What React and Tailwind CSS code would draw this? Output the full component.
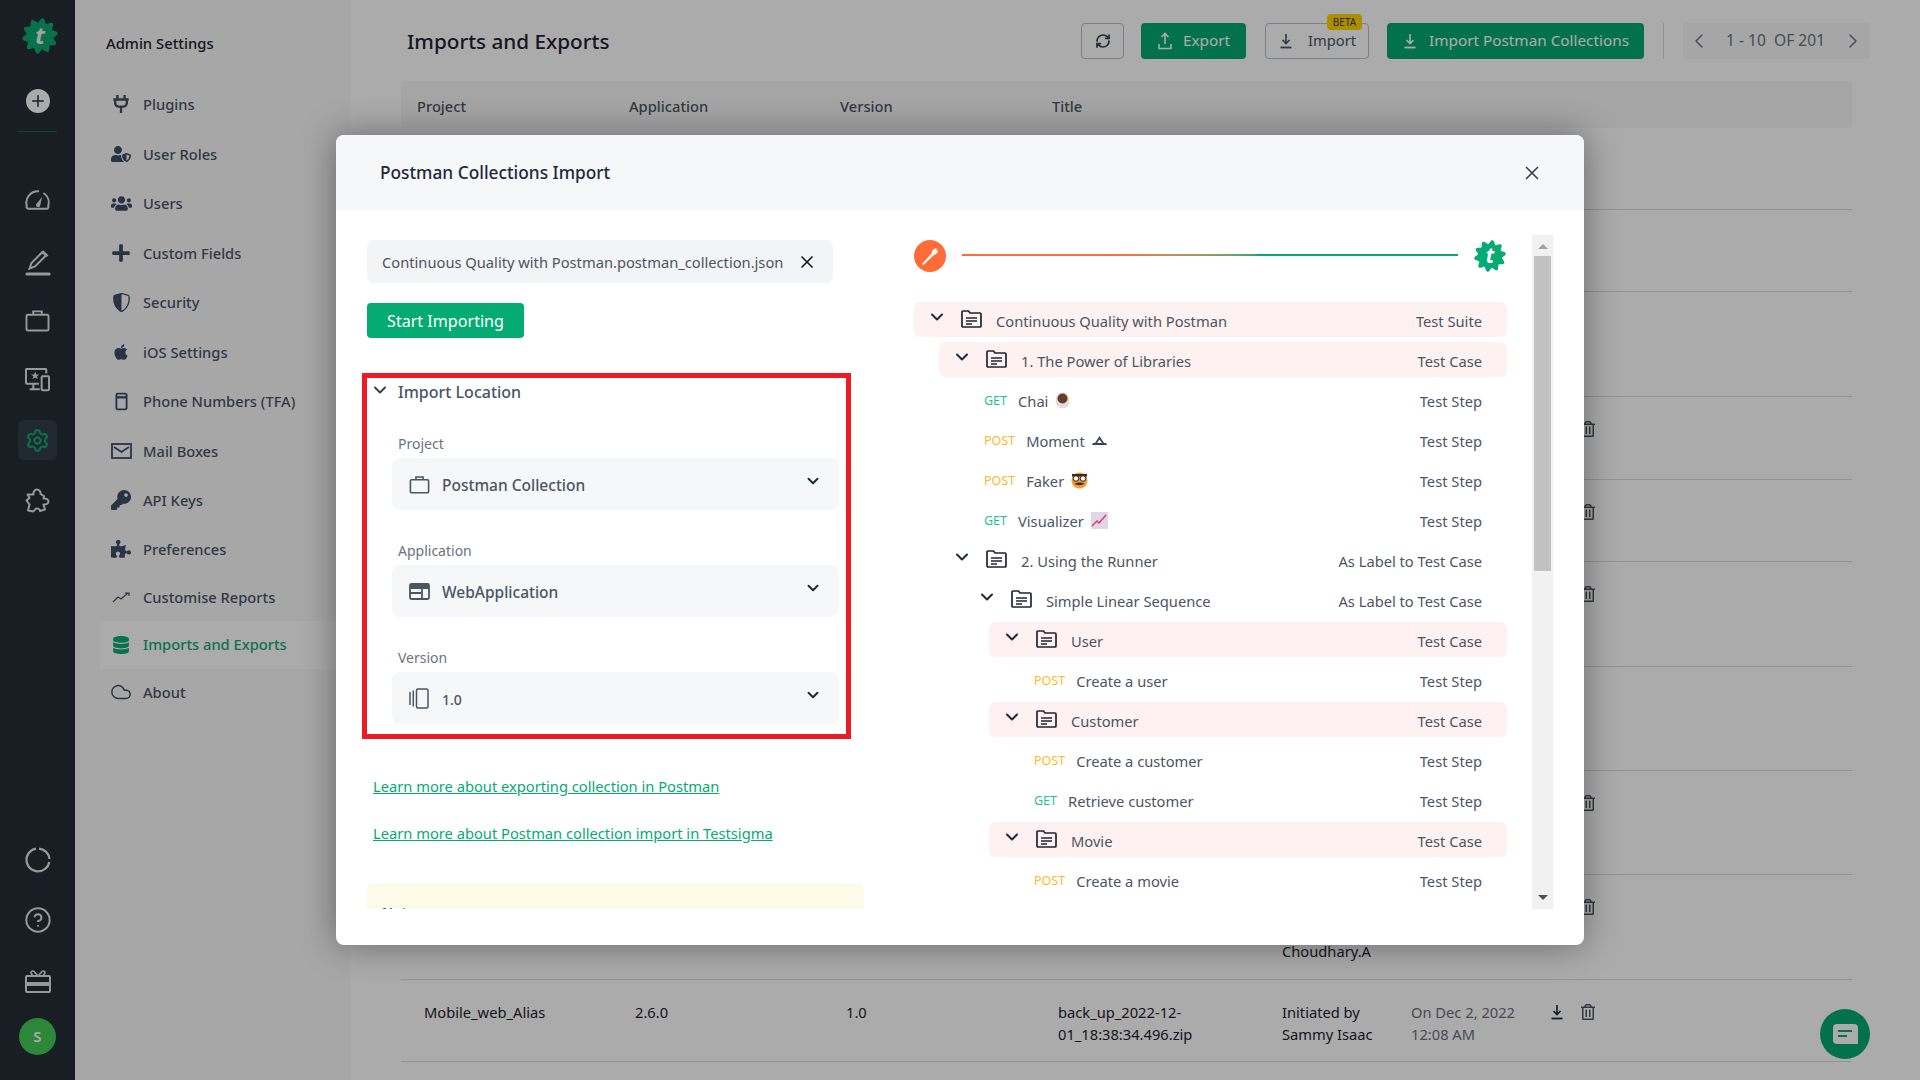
import React from 'react';
import { ChevronDown, ChevronLeft, ChevronRight, X, Settings, CircleHelp, Cloud, RefreshCw, Plus } from 'lucide-react';
import { FaUserShield, FaUsers, FaPlus, FaApple, FaKey, FaPuzzlePiece, FaDatabase, FaRegTrashAlt } from 'react-icons/fa';
import { BsShieldShaded } from 'react-icons/bs';

// scalloped badge used by the logo
const badgePath = () => {
  const pts = [];
  for (let i = 0; i < 120; i++) {
    const a = (i / 120) * Math.PI * 2;
    const r = 44 + 6 * Math.cos(a * 10 + Math.PI / 2);
    pts.push(`${(50 + r * Math.cos(a)).toFixed(1)},${(50 + r * Math.sin(a)).toFixed(1)}`);
  }
  return `M${pts.join('L')}Z`;
};

const Logo = ({ size, color, letter }) => (
  <svg width={size} height={size} viewBox="0 0 100 100">
    <path d={badgePath()} fill={color} />
    <text x="50" y="73" textAnchor="middle" fontSize="64" fontWeight="700" fontStyle="italic" fontFamily="Noto Sans, sans-serif" fill={letter}>t</text>
  </svg>
);

const Plug = () => (
  <svg width="18" height="20" viewBox="0 0 20 22" fill="none" stroke="currentColor" strokeWidth="2.6">
    <path d="M6 1v5M14 1v5M1.500 6h17M3.500 6v4a4 4 0 0 0 4 4h5a4 4 0 0 0 4-4V6M10 14v7" />
  </svg>
);
const Phone = () => (
  <svg width="13" height="19" viewBox="0 0 14 20" fill="none" stroke="currentColor" strokeWidth="2">
    <rect x="1.500" y="1.500" width="11" height="17" rx="1.500" /><path d="M1.500 5.500h11" strokeWidth="2.500" />
  </svg>
);
const Mail = () => (
  <svg width="21" height="16" viewBox="0 0 21 16" fill="none" stroke="currentColor" strokeWidth="1.800">
    <rect x="1" y="1" width="19" height="14" /><path d="M3 4l7.500 5L18 4" />
  </svg>
);
const Trend = () => (
  <svg width="18" height="12" viewBox="0 0 18 12" fill="none" stroke="currentColor" strokeWidth="1.200">
    <path d="M1 11l5-5 3 2 7-6M13 2h4v3" />
  </svg>
);
const Gauge = () => (
  <svg width="25" height="20" viewBox="0 0 25 20" fill="none" stroke="currentColor" strokeWidth="2">
    <path d="M3.500 18.800h18a2 2 0 0 0 1.700-3A11.500 11.500 0 0 0 18.500 3M14 1.200A11.500 11.500 0 0 0 1.800 15.800a2 2 0 0 0 1.700 3" />
    <path d="M11 14.500l6-7.500-1.800 8.500a2 2 0 0 1-4.200-1z" fill="currentColor" stroke="none" />
  </svg>
);
const Edit = () => (
  <svg width="26" height="27" viewBox="0 0 26 27" fill="none" stroke="currentColor" strokeWidth="2">
    <path d="M4.500 19.500L6.500 14 17.500 3l3.500 3.500L10 17.500z" />
    <path d="M18.500 1.500l5 5-2 1.500-5-5z" fill="currentColor" stroke="none" />
    <path d="M2 25h22" strokeWidth="3.200" strokeLinecap="round" />
  </svg>
);
const Case = ({ w = 25, h = 23, sw = 2 }) => (
  <svg width={w} height={h} viewBox="0 0 26 24" fill="none" stroke="currentColor" strokeWidth={sw}>
    <rect x="1.500" y="6" width="23" height="16.500" rx="1.500" /><path d="M8.500 6V2.500h9V6" />
  </svg>
);
const Devices = () => (
  <svg width="25" height="24" viewBox="0 0 27 26" fill="none" stroke="currentColor" strokeWidth="2.200">
    <path d="M15 17H2a1 1 0 0 1-1-1V2a1 1 0 0 1 1-1h20a1 1 0 0 1 1 1v4M9 17v5M5 23h11" />
    <rect x="18" y="9" width="8" height="15" rx="1" />
    <path d="M11 4l1.300 3h3l-2.400 2 1 3-2.900-1.800L8 12l1-3-2.400-2h3z" fill="currentColor" stroke="none" />
  </svg>
);
const PuzzleOutline = () => (
  <svg width="25" height="25" viewBox="0 0 25 25" fill="none" stroke="currentColor" strokeWidth="2" strokeLinejoin="round">
    <path d="M2.500 6.500H8.500C8 3.500 10 1.500 12 1.500C14 1.500 16 3.500 15.500 6L19 8L18.500 10.500C21 10 23.500 11.500 23.500 13.500C23.500 15.500 21 17 18.500 16.500L20 21.500L15 23C14.500 20.500 12 19.800 10.500 21L8.500 23.500L3 22.500L4.500 16.500L1.500 12.500L4.500 10z" />
  </svg>
);
const Ring = () => (
  <svg width="26" height="26" viewBox="0 0 26 26" fill="none" stroke="currentColor" strokeWidth="2.200">
    <path d="M14 1.600A11.500 11.500 0 0 1 24.500 12M24.300 15A11.500 11.500 0 1 1 11 1.600" />
  </svg>
);
const Gift = () => (
  <svg width="26" height="24" viewBox="0 0 26 24" fill="none" stroke="currentColor" strokeWidth="2">
    <rect x="1" y="7" width="24" height="16" rx="1" /><path d="M1 15h24" strokeWidth="4" />
    <path d="M13 7L9 2.500a1.800 1.800 0 0 0-3 1.500L8 7M13 7l4-4.500a1.800 1.800 0 0 1 3 1.500l-2 3" strokeWidth="1.600" />
  </svg>
);
const Download = ({ size = 16, bar = 'currentColor' }) => (
  <svg width={size} height={size} viewBox="0 0 16 16" fill="none" stroke="currentColor" strokeWidth="1.600">
    <path d="M8 1v9M4.500 7L8 10.500 11.500 7" /><path d="M2.500 14.500h11" stroke={bar} strokeWidth="1.800" />
  </svg>
);
const Upload = () => (
  <svg width="16" height="18" viewBox="0 0 16 18" fill="none" stroke="currentColor" strokeWidth="1.600">
    <path d="M8 12V2M4.500 5L8 1.500 11.500 5M2 12v4.500h12V12" />
  </svg>
);
const AppWindow = () => (
  <svg width="21" height="17" viewBox="0 0 21 17" fill="none" stroke="currentColor" strokeWidth="1.800">
    <rect x="1" y="1" width="19" height="15" rx="1.500" /><path d="M1 4h19" strokeWidth="4" /><path d="M1 10h11M13 6v10" />
  </svg>
);
const Versions = () => (
  <svg width="20" height="21" viewBox="0 0 20 21" fill="none" stroke="currentColor" strokeWidth="1.500">
    <rect x="7.500" y="1" width="11.500" height="19" rx="1.500" /><path d="M1 4v13M4.300 2.500v16" />
  </svg>
);
const Folder = () => (
  <svg width="21" height="18" viewBox="0 0 21 18" fill="none" stroke="#1f2430" strokeWidth="1.700">
    <path d="M1 3V2a1 1 0 0 1 1-1h5.500l1.500 2h10a1 1 0 0 1 1 1v12a1 1 0 0 1-1 1H2a1 1 0 0 1-1-1z" />
    <path d="M5 8h11M5 11h11M5 14h6" strokeWidth="1.400" />
  </svg>
);
const ChatIcon = () => (
  <svg width="26" height="20" viewBox="0 0 26 20" fill="none">
    <path d="M5 0h17a4 4 0 0 1 4 4v16H5a4 4 0 0 1-4-4V4a4 4 0 0 1 4-4z" fill="#ffffff" />
    <path d="M6 7h14M6 12h9" stroke="#10a873" strokeWidth="2" />
  </svg>
);
const Triangle = ({ up, fill }) => (
  <svg width="10" height="5" viewBox="0 0 10 5" fill={fill}><path d={up ? 'M5 0l5 5H0z' : 'M0 0h10L5 5z'} /></svg>
);
const PostmanLogo = () => (
  <svg width="32" height="32" viewBox="0 0 32 32">
    <circle cx="16" cy="16" r="16" fill="#ff6c37" />
    <path d="M8 24l10-11 2 2L9.500 25z" fill="#ffffff" />
    <ellipse cx="21" cy="11.500" rx="2.500" ry="3.500" transform="rotate(42 21 11.500)" fill="#ffffff" />
    <path d="M22 9l2 2" stroke="#ff6c37" strokeWidth="1" />
  </svg>
);
const ChaiEmoji = () => (
  <svg width="15" height="18" viewBox="0 0 15 18"><ellipse cx="7.500" cy="9.500" rx="7" ry="8" fill="#dedede" /><circle cx="7.500" cy="7.500" r="5" fill="#6d3a2a" /></svg>
);
const MomentEmoji = () => (
  <svg width="15" height="9" viewBox="0 0 15 9"><path d="M0 9l1-2h13l1 2z" fill="#3b4252" /><path d="M3 7l4.500-7L12 7h-2L7.500 3.500 5 7z" fill="#3b4252" /></svg>
);
const FakerEmoji = () => (
  <svg width="17" height="18" viewBox="0 0 17 18">
    <circle cx="8.500" cy="9.500" r="8" fill="#f59e2c" /><path d="M1 3h15v2.500H1z" fill="#3b2a20" />
    <circle cx="5" cy="7.500" r="2.800" fill="#f3f3f3" stroke="#222222" /><circle cx="12" cy="7.500" r="2.800" fill="#f3f3f3" stroke="#222222" />
    <path d="M3.500 13c3-2 7-2 10 0-3 1.500-7 1.500-10 0z" fill="#3b2a20" />
  </svg>
);
const ChartEmoji = () => (
  <svg width="17" height="17" viewBox="0 0 17 17"><rect width="17" height="17" rx="1" fill="#dcd8ea" /><path d="M1 14l5-5 2 2 7-8" fill="none" stroke="#e8315a" strokeWidth="1.400" /></svg>
);

const navItems = [
  { label: 'Plugins', icon: <Plug />, h: 'h-[49.5px]' },
  { label: 'User Roles', icon: <FaUserShield size={20} />, h: 'h-[49.5px]' },
  { label: 'Users', icon: <FaUsers size={21} />, h: 'h-[49.5px]' },
  { label: 'Custom Fields', icon: <FaPlus size={20} />, h: 'h-[49.5px]' },
  { label: 'Security', icon: <BsShieldShaded size={19} />, h: 'h-[49.5px]' },
  { label: 'iOS Settings', icon: <FaApple size={18} />, h: 'h-[49.5px]' },
  { label: 'Phone Numbers (TFA)', icon: <Phone />, h: 'h-[49.5px]' },
  { label: 'Mail Boxes', icon: <Mail />, h: 'h-[49.5px]' },
  { label: 'API Keys', icon: <FaKey size={20} />, h: 'h-[49.5px]' },
  { label: 'Preferences', icon: <FaPuzzlePiece size={20} />, h: 'h-[48.5px]' },
  { label: 'Customise Reports', icon: <Trend />, h: 'h-[47px]' },
  { label: 'Imports and Exports', icon: <FaDatabase size={18} />, h: 'h-[48px]', active: true },
  { label: 'About', icon: <Cloud size={22} strokeWidth={1.6} />, h: 'h-[47px]' },
];

const rows = [
  { h: 'h-[82px]' },
  { h: 'h-[82px]' },
  { h: 'h-[105px]' },
  { h: 'h-[82.5px]', trash: true },
  { h: 'h-[82.5px]', trash: true },
  { h: 'h-[105px]', trash: true },
  { h: 'h-[104px]' },
  { h: 'h-[104px]', trash: true },
  { h: 'h-[105px]', trash: true, by: ['Initiated by', 'Sammy', 'Choudhary.A'] },
  {
    h: 'h-[82px]', trash: true, project: 'Mobile_web_Alias', app: '2.6.0', version: '1.0',
    title: 'back_up_2022-12-01_18:38:34.496.zip', by: ['Initiated by', 'Sammy Isaac'], date: ['On Dec 2, 2022', '12:08 AM'],
  },
];

const tree = [
  { level: 0, folder: true, label: 'Continuous Quality with Postman', kind: 'Test Suite', pink: true },
  { level: 1, folder: true, label: '1. The Power of Libraries', kind: 'Test Case', pink: true },
  { level: 1, method: 'GET', label: 'Chai', emoji: <ChaiEmoji />, kind: 'Test Step' },
  { level: 1, method: 'POST', label: 'Moment', emoji: <MomentEmoji />, kind: 'Test Step' },
  { level: 1, method: 'POST', label: 'Faker', emoji: <FakerEmoji />, kind: 'Test Step' },
  { level: 1, method: 'GET', label: 'Visualizer', emoji: <ChartEmoji />, kind: 'Test Step' },
  { level: 1, folder: true, label: '2. Using the Runner', kind: 'As Label to Test Case' },
  { level: 2, folder: true, label: 'Simple Linear Sequence', kind: 'As Label to Test Case' },
  { level: 3, folder: true, label: 'User', kind: 'Test Case', pink: true },
  { level: 3, method: 'POST', label: 'Create a user', kind: 'Test Step' },
  { level: 3, folder: true, label: 'Customer', kind: 'Test Case', pink: true },
  { level: 3, method: 'POST', label: 'Create a customer', kind: 'Test Step' },
  { level: 3, method: 'GET', label: 'Retrieve customer', kind: 'Test Step' },
  { level: 3, folder: true, label: 'Movie', kind: 'Test Case', pink: true },
  { level: 3, method: 'POST', label: 'Create a movie', kind: 'Test Step' },
];

const levelClass = ['ml-0', 'ml-[25px]', 'ml-[50px]', 'ml-[75px]'];

const TreeRow = ({ row }) => (
  <div className={`flex items-center h-[35px] mb-[5px] rounded-md pr-[25px] ${levelClass[row.level]} ${row.pink ? 'bg-[#fef1f1]' : ''}`}>
    {row.folder ? (
      <>
        <span className="w-[47px] pl-[13px] text-[#1f2937] -mt-[5px]"><ChevronDown size={20} strokeWidth={2.4} /></span>
        <span className="-mt-[1px]"><Folder /></span>
        <span className="ml-[14px] pt-[3px]">{row.label}</span>
      </>
    ) : (
      <>
        <span className={`ml-[45px] text-[12.5px] pt-[3px] ${row.method === 'GET' ? 'text-[#1fc48d]' : 'text-[#fdb92c]'}`}>{row.method}</span>
        <span className="ml-[11px] pt-[3px]">{row.label}</span>
        {row.emoji && <span className="ml-[7px] pt-[1px]">{row.emoji}</span>}
      </>
    )}
    <span className="ml-auto pt-[3px]">{row.kind}</span>
  </div>
);

const SelectBox = ({ icon, label, small }) => (
  <div className="flex items-center h-[52px] ml-[25px] mr-[7px] rounded-lg bg-[#f6f7f9]">
    <span className="w-[50px] pl-[17px] text-[#4b5563]">{icon}</span>
    <span className={`font-medium text-[#4b5563] pt-[3px] ${small ? 'text-[14px]' : 'text-[15.5px]'}`}>{label}</span>
    <span className="ml-auto mr-[17px] -mt-[7px] text-[#1f2937]"><ChevronDown size={18} strokeWidth={2.6} /></span>
  </div>
);

const App = () => {
  return (
    <div className="relative flex h-screen w-screen overflow-hidden bg-white font-['Noto_Sans',sans-serif] text-[14.7px]">
      {/* icon rail */}
      <aside className="flex flex-col items-center w-[75px] h-full bg-[#252d36] text-[#dbe8e2] shrink-0">
        <div className="mt-[18px] ml-[4px] h-[36px]"><Logo size={36} color="#0da86f" letter="#f2f5f3" /></div>
        <div className="mt-[35px] flex items-center justify-center w-[24px] h-[24px] rounded-full bg-white text-[#252d36]"><Plus size={18} /></div>
        <div className="mt-[18px] w-[39px] h-px bg-[#0a6e4a]" />
        <div className="mt-[38px] grid justify-items-center items-center grid-rows-[60px_60px_60px_60px_60px_60px]">
          <Gauge />
          <div className="mt-[4px]"><Edit /></div>
          <Case />
          <Devices />
          <div className="flex items-center justify-center w-[39px] h-[40px] rounded-md bg-[#333c47] text-[#10a873]"><Settings size={25} strokeWidth={2} /></div>
          <PuzzleOutline />
        </div>
        <div className="mt-auto"><Ring /></div>
        <div className="mt-[33px]"><CircleHelp size={28} strokeWidth={1.7} /></div>
        <div className="mt-[35px]"><Gift /></div>
        <div className="mt-[25px] mb-[25px] flex items-center justify-center w-[37px] h-[37px] rounded-full bg-[#43ca54] text-white text-[15px] font-semibold">S</div>
      </aside>

      {/* settings menu */}
      <nav className="w-[275px] h-full bg-[#fafafa] shrink-0 pt-[32px] pl-[25px] text-[#4a5568]">
        <div className="ml-[6px] h-[22px] text-[14.8px] font-medium text-[#1f2430]">Admin Settings</div>
        <div className="mt-[25.5px]">
          {navItems.map((item) => (
            <div key={item.label} className={`flex items-center pl-[10px] ${item.h} ${item.active ? 'bg-white text-[#14a974]' : ''}`}>
              <span className={`flex justify-center w-[22px] ${item.active ? 'text-[#10a873]' : 'text-[#3f4d66]'}`}>{item.icon}</span>
              <span className="ml-[11px] font-medium">{item.label}</span>
            </div>
          ))}
        </div>
      </nav>

      {/* imports table behind the dialog */}
      <main className="flex-1 pl-[51px] h-full text-[#1f2430]">
        <header className="flex items-center h-[36px] mt-[23px] pr-[50px]">
          <h1 className="ml-[6px] pt-[2px] text-[20.7px] font-medium">Imports and Exports</h1>
          <div className="ml-auto flex items-center">
            <button className="flex items-center justify-center w-[43px] h-[36px] rounded border border-[#b6c0cd] text-[#374151]"><RefreshCw size={16} strokeWidth={2.6} /></button>
            <button className="ml-[17px] flex items-center justify-center gap-[10px] w-[105px] h-[36px] pb-[1px] rounded bg-[#05ab72] text-white text-[15.3px]"><Upload />Export</button>
            <div className="relative ml-[19px]">
              <button className="flex items-center justify-center gap-[14px] w-[104px] h-[36px] pb-[1px] rounded border border-[#b6c0cd] text-[#4b5563]"><Download />Import</button>
              <span className="absolute -top-[9px] right-[7px] flex items-center justify-center w-[35px] h-[16px] rounded-sm bg-[#ffd500] text-[10px] text-[#374151]">BETA</span>
            </div>
            <button className="ml-[18px] flex items-center justify-center gap-[11px] w-[257px] h-[36px] pb-[1px] rounded bg-[#05ab72] text-white text-[15.3px]"><Download />Import Postman Collections</button>
            <div className="ml-[19px] w-px h-[36px] bg-[#d5d8dc]" />
            <div className="ml-[19px] flex items-center w-[187px] h-[36px] rounded bg-[#f8f8f8] text-[#6b7280] text-[15.6px]">
              <ChevronLeft size={24} strokeWidth={1.5} className="ml-[4px]" />
              <span className="ml-[15px] whitespace-pre">1 - 10  OF 201</span>
              <ChevronRight size={24} strokeWidth={1.5} className="ml-[16px]" />
            </div>
          </div>
        </header>

        <div className="w-[1451px] mt-[22px]">
          <div className="grid grid-cols-[212px_211px_212px_1fr] items-center h-[47px] pl-[16px] pt-[3px] rounded bg-[#f7f7f7] text-[#4b5563] font-medium">
            <span>Project</span><span>Application</span><span>Version</span><span>Title</span>
          </div>
          {rows.map((row, i) => (
            <div key={i} className={`grid grid-cols-[211px_211px_212px_224px_129px_138px_30px_40px] pl-[23px] pt-[21px] leading-[22px] border-b border-[#dcdcdc] ${row.h}`}>
              <span>{row.project}</span>
              <span>{row.app}</span>
              <span>{row.version}</span>
              <span className="w-[150px] break-words">{row.title}</span>
              <span>
                {row.by && row.by.map((line) => <div key={line}>{line}</div>)}
              </span>
              <span className="text-[#6b7280]">
                {row.date && row.date.map((line) => <div key={line}>{line}</div>)}
              </span>
              <span className="pt-[3px]">{row.date && <Download size={16} />}</span>
              <span className="pt-[3px] pl-[1px] text-[#4b5563]">{row.trash && <FaRegTrashAlt size={16} />}</span>
            </div>
          ))}
        </div>
      </main>

      <button className="absolute left-[1820px] top-[1009px] flex items-center justify-center w-[50px] h-[50px] rounded-full bg-[#05ab72]"><ChatIcon /></button>

      {/* backdrop */}
      <div className="absolute inset-0 bg-[rgba(0,0,0,0.33)]" />

      {/* dialog */}
      <div className="absolute left-[336px] top-[135px] w-[1248px] h-[810px] rounded-lg bg-white shadow-[0_0_35px_rgba(0,0,0,0.4)] overflow-hidden">
        <div className="flex items-center justify-between h-[75px] pl-[44px] pr-[41px] bg-[#f6f7f9]">
          <h2 className="text-[17.3px] font-medium text-[#1f2937]">Postman Collections Import</h2>
          <X size={22} strokeWidth={1.8} className="text-[#374151]" />
        </div>
        <div className="flex h-[699px] pl-[26px] pt-[25px]">
          {/* left column */}
          <div className="w-[502px] h-[674px] overflow-hidden pt-[5px]">
            <div className="flex items-center ml-[5px] w-[466px] h-[43px] pl-[15px] rounded-md bg-[#f3f4f6] text-[#4b5563]">
              <span className="pt-[1px]">Continuous Quality with Postman.postman_collection.json</span>
              <X size={20} strokeWidth={2} className="ml-[14px] text-[#111827]" />
            </div>
            <button className="block mt-[20px] ml-[5px] w-[157px] h-[35px] pt-[1px] rounded bg-[#05ab72] text-white text-[16.1px]">Start Importing</button>

            <div className="mt-[35px] w-[489px] h-[366px] border-[5px] border-[#ed1c24]">
              <div className="flex items-center h-[28px] pl-[3px] text-[16px] font-medium text-[#4b5563]">
                <ChevronDown size={20} strokeWidth={2.4} className="text-[#374151] -mt-[5px]" />
                <span className="ml-[8px]">Import Location</span>
              </div>
              <label className="block mt-[28px] ml-[31px] h-[20px] leading-[20px] text-[14px] text-[#6b7280]">Project</label>
              <div className="mt-[4px]"><SelectBox icon={<Case w={21} h={19} />} label="Postman Collection" /></div>
              <label className="block mt-[31px] ml-[31px] h-[20px] leading-[20px] text-[14px] text-[#6b7280]">Application</label>
              <div className="mt-[4px]"><SelectBox icon={<AppWindow />} label="WebApplication" /></div>
              <label className="block mt-[31px] ml-[31px] h-[20px] leading-[20px] text-[14px] text-[#6b7280]">Version</label>
              <div className="mt-[4px]"><SelectBox icon={<Versions />} label="1.0" small /></div>
            </div>

            <a className="block mt-[35px] ml-[11px] h-[24px] leading-[24px] text-[#05ab72] underline">Learn more about exporting collection in Postman</a>
            <a className="block mt-[23px] ml-[11px] h-[24px] leading-[24px] text-[#05ab72] underline">Learn more about Postman collection import in Testsigma</a>
            <div className="mt-[38px] ml-[5px] w-[497px] h-[60px] pt-[19px] pl-[15px] rounded-md bg-[#fefaea] text-[14px] font-medium text-[#374151]">Note</div>
          </div>

          {/* right column */}
          <div className="flex ml-[50px] h-[674px]">
            <div className="w-[618px] h-full overflow-hidden pt-[5px] text-[#4b5563]">
              <div className="flex items-center w-[593px] h-[32px] mb-[30px]">
                <PostmanLogo />
                <div className="ml-[16px] w-[496px] h-[2px] -mt-[2px] bg-gradient-to-r from-[#ff6c37] from-[30%] to-[#05ab72] to-[60%]" />
                <span className="ml-[16px]"><Logo size={32} color="#05ab72" letter="#ffffff" /></span>
              </div>
              <div className="w-[593px]">
                {tree.map((row) => <TreeRow key={row.label} row={row} />)}
              </div>
            </div>
            {/* scrollbar */}
            <div className="flex flex-col items-center w-[21px] h-full bg-[#f1f1f1] pt-[9px]">
              <Triangle up fill="#a3a3a3" />
              <div className="mt-[7px] w-[17px] h-[315px] bg-[#c1c1c1]" />
              <span className="mt-auto mb-[9px]"><Triangle fill="#505050" /></span>
            </div>
          </div>
        </div>
      </div>
    </div>
  );
};

export default App;
